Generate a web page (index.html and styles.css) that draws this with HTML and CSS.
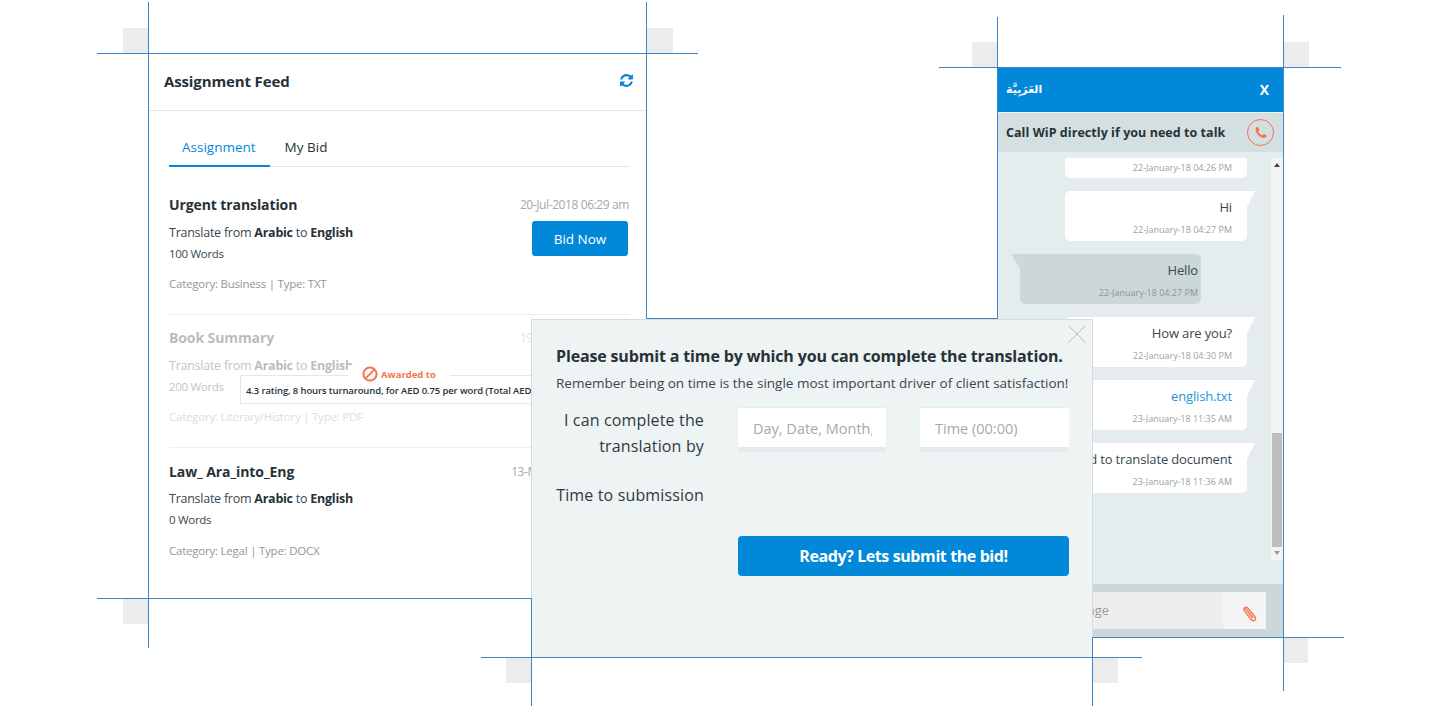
FILE: index.html
```html
<!DOCTYPE html>
<html>
<head>
    <title>Assignment Feed</title>
    <link rel="stylesheet" href="styles.css">
</head>
<body>
<div class="canvas">

    <!-- corner squares behind the windows -->
    <div class="tick tick-feed-tl"></div>
    <div class="tick tick-feed-tr"></div>
    <div class="tick tick-feed-bl"></div>
    <div class="tick tick-chat-tl"></div>
    <div class="tick tick-chat-tr"></div>
    <div class="tick tick-chat-br"></div>
    <div class="tick tick-modal-bl"></div>
    <div class="tick tick-modal-br"></div>

    <!-- feed window -->
    <section class="feed">
        <header class="feed_head">
            <h2>Assignment Feed</h2>
            <svg class="refresh" viewBox="0 0 1792 1792"><path d="M1639 1056q0 5-1 7-64 268-268 434.5t-478 166.5q-146 0-282.5-55t-243.5-157l-129 129q-19 19-45 19t-45-19-19-45v-448q0-26 19-45t45-19h448q26 0 45 19t19 45-19 45l-137 137q71 66 161 102t187 36q134 0 250-65t186-179q11-17 53-117 8-23 30-23h192q13 0 22.5 9.5t9.5 22.5zm25-800v448q0 26-19 45t-45 19h-448q-26 0-45-19t-19-45 19-45l138-138q-148-137-349-137-134 0-250 65t-186 179q-11 17-53 117-8 23-30 23h-199q-13 0-22.5-9.5t-9.5-22.5v-7q65-268 270-434.5t480-166.5q146 0 284 55.5t245 156.5l130-129q19-19 45-19t45 19 19 45z"/></svg>
        </header>
        <div class="feed_body">
            <nav class="tabs">
                <a class="tab tab_active">Assignment</a>
                <a class="tab">My Bid</a>
            </nav>

            <article class="item">
                <div class="item_row">
                    <div>
                        <h3>Urgent translation</h3>
                        <p class="langs">Translate from <b>Arabic</b> to <b>English</b></p>
                        <p class="words">100 Words</p>
                        <p class="meta">Category: Business | Type: TXT</p>
                    </div>
                    <div class="item_side">
                        <span class="date">20-Jul-2018 06:29 am</span>
                        <button class="bid">Bid Now</button>
                    </div>
                </div>
            </article>

            <article class="item item_awarded">
                <div class="item_row item_faded">
                    <div>
                        <h3>Book Summary</h3>
                        <p class="langs">Translate from <b>Arabic</b> to <b>English</b></p>
                        <p class="words">200 Words</p>
                        <p class="meta">Category: Literary/History | Type: PDF</p>
                    </div>
                    <div class="item_side">
                        <span class="date">19-Jul-2018 06:29 am</span>
                    </div>
                </div>
                <div class="award">
                    <div class="award_label">
                        <svg class="ban" viewBox="0 0 16 16"><circle cx="8" cy="8" r="6.6"/><line x1="3.4" y1="12.6" x2="12.6" y2="3.4"/></svg>
                        <span>Awarded to</span>
                    </div>
                    4.3 rating, 8 hours turnaround, for AED 0.75 per word (Total AED 150)
                </div>
            </article>

            <article class="item item_last">
                <div class="item_row">
                    <div>
                        <h3>Law_ Ara_into_Eng</h3>
                        <p class="langs">Translate from <b>Arabic</b> to <b>English</b></p>
                        <p class="words">0 Words</p>
                        <p class="meta">Category: Legal | Type: DOCX</p>
                    </div>
                    <div class="item_side">
                        <span class="date">13-Mar-2018 06:29 am</span>
                    </div>
                </div>
            </article>
        </div>
    </section>

    <!-- chat window -->
    <section class="chat">
        <header class="chat_head">
            <span class="chat_lang">العَرَبِيَّة</span>
            <span class="chat_close">X</span>
        </header>
        <div class="chat_call">
            <span>Call WiP directly if you need to talk</span>
            <span class="call_btn">
                <svg viewBox="0 0 1792 1792"><path d="M1600 1240q0 27-10 70.5t-21 68.5q-21 50-122 106-94 51-186 51-27 0-53-3.5t-57.5-12.5-47-14.5-55.5-20.5-49-18q-98-35-175-83-127-79-264-216t-216-264q-48-77-83-175-3-9-18-49t-20.5-55.5-14.5-47-12.5-57.5-3.5-53q0-92 51-186 56-101 106-122 25-11 68.5-21t70.5-10q14 0 21 3 18 6 53 76 11 19 30 54t35 63.5 31 53.5q3 4 17.5 25t21.5 35.5 7 28.5q0 20-28.5 50t-62 55-62 53-28.5 46q0 9 5 22.5t8.5 20.5 14 24 11.5 19q76 137 174 235t235 174q2 1 19 11.5t24 14 20.5 8.5 22.5 5q18 0 46-28.5t53-62 55-62 50-28.5q14 0 28.5 7t35.5 21.5 25 17.5q25 15 53.5 31t63.5 35 54 30q70 35 76 53 3 7 3 21z"/></svg>
            </span>
        </div>
        <div class="chat_main">
            <div class="msgs">
                <div class="msg msg_cut"><span class="msg_time">22-January-18 04:26 PM</span></div>
                <div class="msg"><p>Hi</p><span class="msg_time">22-January-18 04:27 PM</span></div>
                <div class="msg msg_mine"><p>Hello</p><span class="msg_time">22-January-18 04:27 PM</span></div>
                <div class="msg"><p>How are you?</p><span class="msg_time">22-January-18 04:30 PM</span></div>
                <div class="msg"><p class="msg_link">english.txt</p><span class="msg_time">23-January-18 11:35 AM</span></div>
                <div class="msg msg_wide"><p>I need to translate document</p><span class="msg_time">23-January-18 11:36 AM</span></div>
            </div>
            <div class="scroll">
                <span class="arrow arrow_up"></span>
                <span class="thumb"></span>
                <span class="arrow arrow_down"></span>
            </div>
        </div>
        <footer class="chat_foot">
            <div class="chat_input">Type a message</div>
            <div class="chat_attach">
                <svg viewBox="0 0 16 20"><path d="M11.5 17.5 3.6 7.6a2.4 2.4 0 0 1 3.7-3l8 10a2.4 2.4 0 0 1-3.7 3M5.2 5.6l7.4 9.2" transform="translate(-1.2 -0.6)"/></svg>
            </div>
        </footer>
    </section>

    <!-- blue guide lines -->
    <div class="line line-h line-feed-top"></div>
    <div class="line line-h line-feed-bottom"></div>
    <div class="line line-v line-feed-left"></div>
    <div class="line line-v line-feed-right"></div>
    <div class="line line-h line-join"></div>
    <div class="line line-h line-chat-top"></div>
    <div class="line line-h line-chat-bottom"></div>
    <div class="line line-v line-chat-left"></div>
    <div class="line line-v line-chat-right"></div>
    <div class="line line-h line-modal-bottom"></div>
    <div class="line line-v line-modal-left"></div>
    <div class="line line-v line-modal-right"></div>

    <!-- bid dialog -->
    <section class="modal">
        <svg class="modal_close" viewBox="0 0 18 18"><path d="M0.5 0.5 17.5 17.5M17.5 0.5 0.5 17.5"/></svg>
        <h2>Please submit a time by which you can complete the translation.</h2>
        <p class="modal_sub">Remember being on time is the single most important driver of client satisfaction!</p>
        <div class="modal_form">
            <label class="modal_label">I can complete the translation by</label>
            <input class="field" type="text" placeholder="Day, Date, Month, Year">
            <input class="field" type="text" placeholder="Time (00:00)">
            <label class="modal_label modal_label_time">Time to submission</label>
            <button class="submit">Ready? Lets submit the bid!</button>
        </div>
    </section>
</div>
</body>
</html>
```

FILE: styles.css
```css
*{box-sizing: border-box;}
body{
    margin: 0;
    background-color: #fff;
    font-family: "Open Sans", "Noto Sans", sans-serif;
    color: #263238;
}
h2, h3, p{margin: 0;}

.canvas{
    position: relative;
    width: 1440px;
    height: 706px;
    overflow: hidden;
}

/* corner squares */
.tick{position: absolute; width: 25px; height: 25px; background-color: #ececec;}
.tick-feed-tl{left: 123px; top: 28px;}
.tick-feed-tr{left: 647px; top: 28px; width: 26px;}
.tick-feed-bl{left: 123px; top: 599px;}
.tick-chat-tl{left: 972px; top: 42px;}
.tick-chat-tr{left: 1284px; top: 42px;}
.tick-chat-br{left: 1284px; top: 638px; width: 24px;}
.tick-modal-bl{left: 506px; top: 658px;}
.tick-modal-br{left: 1093px; top: 658px;}

/* guide lines */
.line{position: absolute; background-color: #3f86c8;}
.line-h{height: 1px;}
.line-v{width: 1px;}
.line-feed-top{left: 97px; top: 53px; width: 601px;}
.line-feed-bottom{left: 97px; top: 598px; width: 435px;}
.line-feed-left{left: 148px; top: 2px; height: 646px;}
.line-feed-right{left: 646px; top: 2px; height: 317px;}
.line-join{left: 646px; top: 318px; width: 352px;}
.line-chat-top{left: 939px; top: 67px; width: 402px;}
.line-chat-bottom{left: 1092px; top: 637px; width: 252px;}
.line-chat-left{left: 997px; top: 17px; height: 302px;}
.line-chat-right{left: 1283px; top: 15px; height: 676px;}
.line-modal-bottom{left: 481px; top: 657px; width: 661px; z-index: 3;}
.line-modal-left{left: 531px; top: 598px; height: 108px; z-index: 3;}
.line-modal-right{left: 1092px; top: 637px; height: 69px; z-index: 3;}

/* feed */
.feed{
    position: absolute;
    left: 149px;
    top: 54px;
    width: 497px;
    height: 544px;
    background-color: #fff;
}
.feed_head{
    display: flex;
    align-items: center;
    justify-content: space-between;
    height: 57px;
    padding: 0 12px 3px 15px;
    border-bottom: 1px solid #e4e4e4;
}
.feed_head h2{font-size: 15px; font-weight: 700; letter-spacing: -.13px; color: #263238;}
.refresh{width: 15px; height: 15px; fill: #0288d8;}
.feed_body{padding: 18px 17px 0 20px;}

.tabs{
    display: flex;
    border-bottom: 1px solid #e2e2e2;
    height: 38px;
    margin-bottom: 15px;
}
.tab{
    height: 38px;
    padding: 8px 14px 0 13px;
    font-size: 13.5px;
    line-height: 20px;
    color: #263238;
}
.tab_active{color: #0288d8; border-bottom: 2px solid #0288d8;}
.tab + .tab{padding-left: 15px;}

.item{
    position: relative;
    padding: 13px 0 21px;
    border-bottom: 1px solid #eee;
}
.item_last{padding-top: 14px; border-bottom: 0;}
.item_row{display: flex; justify-content: space-between;}
.item_faded{opacity: .32;}
.item h3{font-size: 14px; line-height: 20px; font-weight: 700; letter-spacing: -.1px; color: #263238;}
.langs{margin-top: 9px; font-size: 12.5px; line-height: 18px; letter-spacing: -.25px; color: #37474f;}
.langs b{color: #263238;}
.words{margin-top: 3px; font-size: 11.5px; line-height: 18px; letter-spacing: -.3px; color: #37474f;}
.meta{margin-top: 12px; font-size: 11.5px; line-height: 18px; letter-spacing: -.23px; color: #90979b;}
.item_last .langs{margin-top: 8px;}
.item_last .meta{margin-top: 13px;}
.item_side{display: flex; flex-direction: column; align-items: flex-end;}
.date{font-size: 12px; line-height: 20px; letter-spacing: -.4px; color: #a3a8aa;}
.bid{
    width: 96px;
    height: 35px;
    margin: 6px 1px 0 0;
    border: 0;
    border-radius: 3px;
    background-color: #0288d8;
    color: #fff;
    font-family: inherit;
    font-size: 13.5px;
}

/* awarded overlay */
.award{
    position: absolute;
    left: 71px;
    top: 60px;
    width: 380px;
    height: 29px;
    padding: 8px 0 0 5px;
    border: 1px solid #e6e6e6;
    background-color: #fff;
    font-size: 9.5px;
    line-height: 13px;
    font-weight: 600;
    letter-spacing: -.12px;
    color: #263238;
    white-space: nowrap;
}
.award_label{
    position: absolute;
    left: 107px;
    top: -11px;
    width: 102px;
    height: 18px;
    padding-left: 14px;
    display: flex;
    align-items: center;
    gap: 3px;
    background-color: #fff;
    font-size: 9.5px;
    font-weight: 700;
    letter-spacing: 0;
    color: #f4734b;
}
.ban{width: 16px; height: 16px; flex: none; fill: none; stroke: #f4734b; stroke-width: 2;}

/* chat */
.chat{
    position: absolute;
    left: 998px;
    top: 68px;
    width: 285px;
    height: 569px;
    display: flex;
    flex-direction: column;
    background-color: #e4ecee;
}
.chat_head{
    display: flex;
    align-items: center;
    justify-content: space-between;
    height: 44px;
    padding: 0 14px 2px 8px;
    background-color: #0288d8;
    color: #fff;
}
.chat_lang{font-family: "DejaVu Sans", sans-serif; font-size: 11px; font-weight: 700;}
.chat_close{font-size: 14px; font-weight: 700;}
.chat_call{
    display: flex;
    align-items: center;
    justify-content: space-between;
    height: 40px;
    padding: 0 9px 0 8px;
    border-top: 1px solid #eef2f3;
    background-color: #d3dfe0;
    font-size: 12.5px;
    font-weight: 700;
    letter-spacing: .05px;
    color: #263238;
}
.call_btn{
    display: flex;
    align-items: center;
    justify-content: center;
    width: 27px;
    height: 27px;
    border: 1.5px solid #f4734b;
    border-radius: 50%;
}
.call_btn svg{width: 14px; height: 14px; fill: #f4734b;}

.chat_main{
    flex: 1;
    display: flex;
    justify-content: space-between;
    padding-top: 6px;
}
.msgs{
    width: 257px;
    display: flex;
    flex-direction: column;
    align-items: flex-end;
    gap: 13px;
}
.msg{
    position: relative;
    width: 182px;
    height: 50px;
    margin-right: 8px;
    padding: 6px 15px 0 0;
    background-color: #fff;
    border-radius: 0 0 5px 5px;
    border-top-left-radius: 5px;
    text-align: right;
    font-size: 13px;
    line-height: 20px;
    letter-spacing: -.15px;
    color: #37474f;
}
.msg:not(.msg_cut)::after{
    content: "";
    position: absolute;
    right: -8px;
    top: 0;
    border-top: 8px solid #fff;
    border-left: 8px solid #fff;
    border-right: 8px solid transparent;
    border-bottom: 8px solid transparent;
    transform: translateX(8px) scaleX(.5);
    transform-origin: left top;
}
.msg_cut{height: 20px; padding-top: 0; border-radius: 0 0 5px 5px;}
.msg_wide{width: 215px;}
.msg_time{display: block; margin-top: 6px; font-size: 9px; line-height: 14px; letter-spacing: 0; color: #9aa2a5;}
.msg_cut .msg_time{margin-top: 3px;}
.msg_link{color: #2a94dc;}
.msg_mine{
    width: 181px;
    margin-right: 54px;
    padding-right: 3px;
    background-color: #cbd7d8;
    border-radius: 0 5px 5px 5px;
}
.msg_mine .msg_time{color: #8b9597;}
.msg:not(.msg_cut).msg_mine::after{
    right: auto;
    left: -9px;
    border-top-color: #cbd7d8;
    border-left-color: transparent;
    border-right-color: #cbd7d8;
    border-right-width: 5px;
    border-left-width: 5px;
    transform: none;
}

.scroll{
    position: relative;
    width: 12px;
    height: 402px;
    background-color: #f3f4f4;
}
.thumb{
    position: absolute;
    left: 1px;
    top: 275px;
    width: 10px;
    height: 114px;
    background-color: #bdbdbd;
}
.arrow{
    position: absolute;
    left: 3px;
    border-left: 3px solid transparent;
    border-right: 3px solid transparent;
}
.arrow_up{top: 5px; border-bottom: 4px solid #444;}
.arrow_down{bottom: 5px; border-top: 4px solid #999;}

.chat_foot{
    display: flex;
    height: 53px;
    padding: 8px 17px 8px 0;
    background-color: #cbd7d8;
}
.chat_input{
    width: 225px;
    padding-top: 8px;
    padding-right: 114px;
    background-color: #eee;
    text-align: right;
    font-size: 13px;
    line-height: 20px;
    color: #9a9a9a;
    white-space: nowrap;
}
.chat_attach{
    display: flex;
    align-items: center;
    justify-content: center;
    width: 43px;
    background-color: #f3f4f4;
}
.chat_attach svg{
    width: 15px;
    height: 19px;
    margin: 6px 0 0 10px;
    fill: none;
    stroke: #f4734b;
    stroke-width: 1.5;
    stroke-linecap: round;
}

/* dialog */
.modal{
    position: absolute;
    left: 531px;
    top: 319px;
    width: 562px;
    height: 339px;
    padding: 25px 23px 0 24px;
    background-color: #eef3f4;
    border: 1px solid #d6dcde;
    z-index: 2;
}
.modal_close{
    position: absolute;
    left: 536px;
    top: 5px;
    width: 18px;
    height: 18px;
    fill: none;
    stroke: #b7bcbe;
}
.modal h2{
    font-size: 16px;
    line-height: 22px;
    font-weight: 700;
    letter-spacing: -.15px;
    white-space: nowrap;
    color: #263238;
}
.modal_sub{margin-top: 6px; font-size: 13.5px; line-height: 20px; color: #37474f; white-space: nowrap;}
.modal_form{
    display: grid;
    grid-template-columns: 148px 148px 149px;
    column-gap: 34px;
    margin-top: 14px;
}
.modal_label{
    text-align: right;
    font-size: 16px;
    line-height: 26px;
    letter-spacing: .15px;
    color: #2f3b40;
}
.modal_label_time{grid-column: 1; margin-top: 23px;}
.field{
    width: 100%;
    height: 45px;
    padding: 2px 14px 0 15px;
    border: 0;
    border-top: 1px solid #e6ebec;
    border-bottom: 5px solid #e4ecee;
    border-radius: 0;
    background-color: #fff;
    font-family: inherit;
    font-size: 14.5px;
    outline: none;
}
.field::placeholder{color: #a8a8a8; opacity: 1;}
.submit{
    grid-column: 2 / 4;
    grid-row: 3;
    height: 40px;
    margin-top: 28px;
    border: 0;
    border-radius: 4px;
    background-color: #0288d8;
    color: #fff;
    font-family: inherit;
    font-size: 16px;
    font-weight: 700;
    letter-spacing: -.4px;
}
```
